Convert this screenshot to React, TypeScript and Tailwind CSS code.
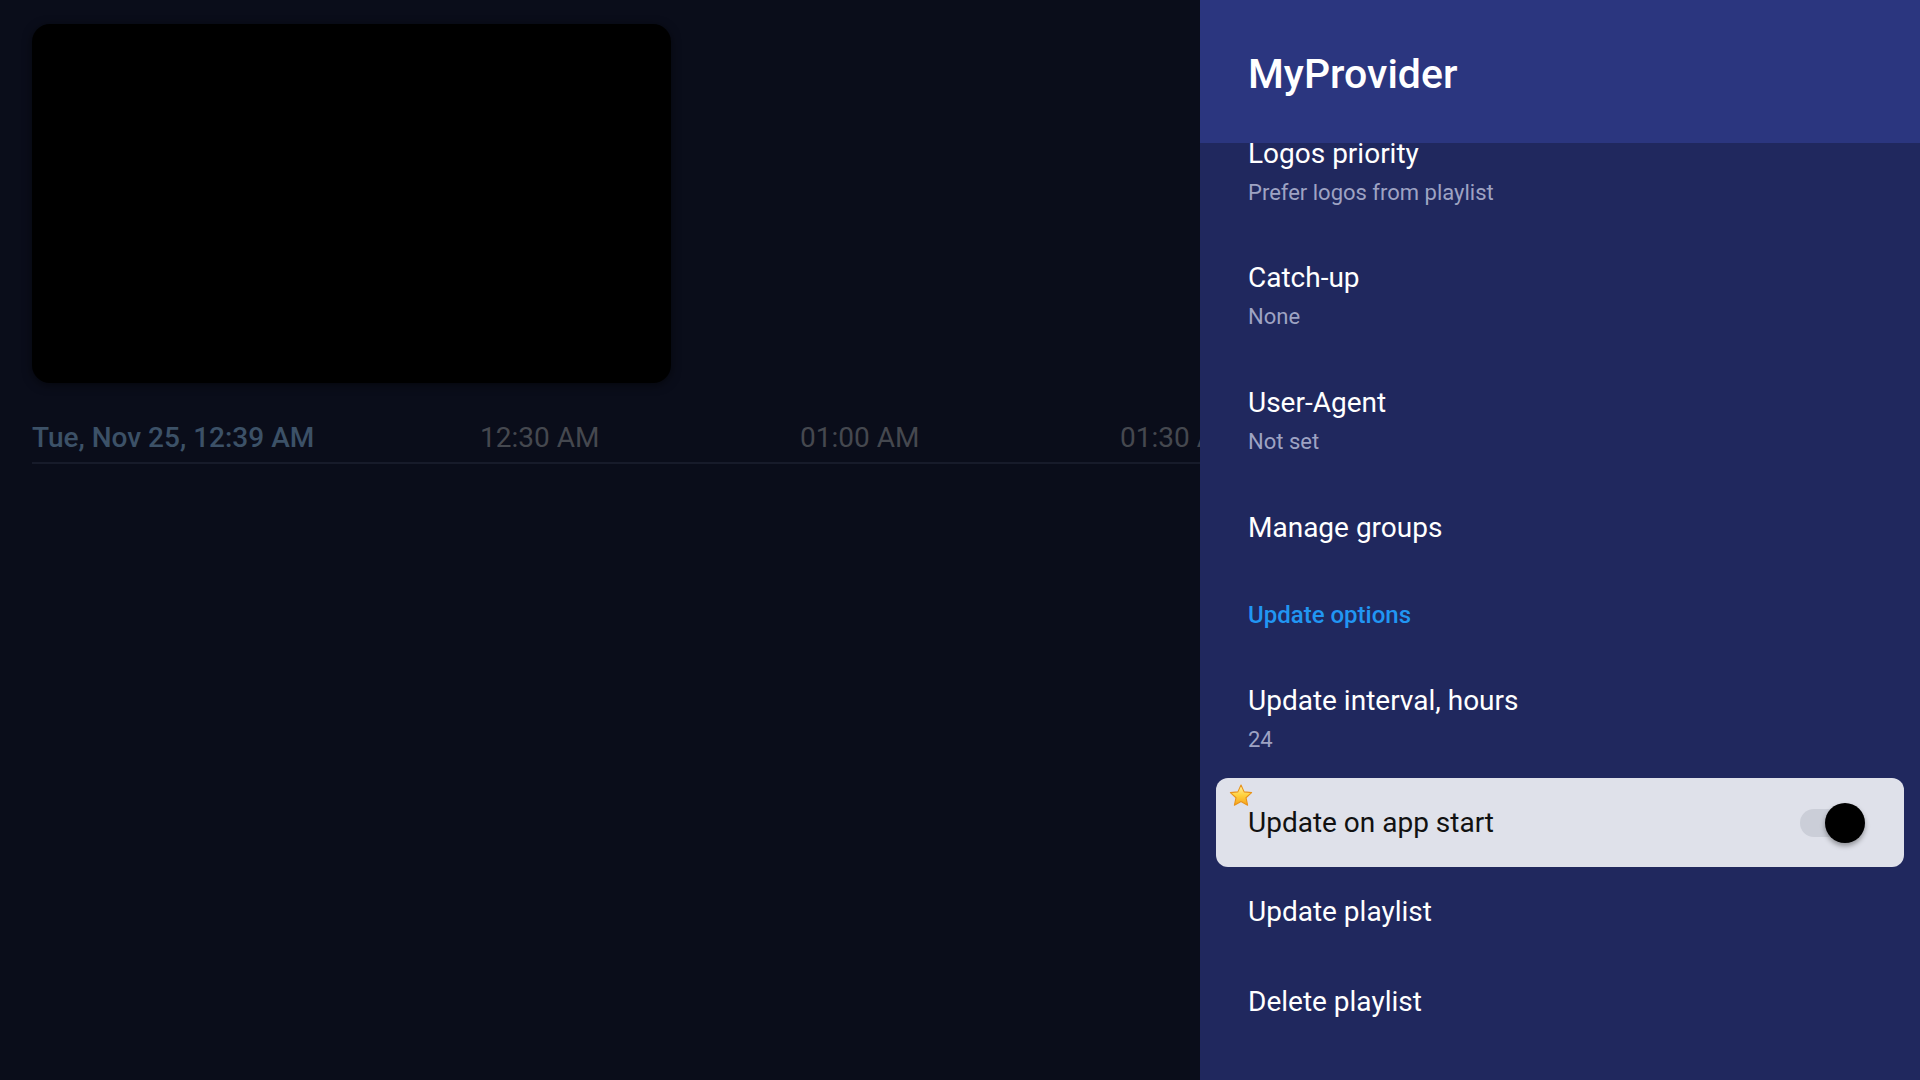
import React from "react";

function Star() {
  return (
    <svg width="26" height="26" viewBox="0 0 24 24" className="absolute left-[12px] top-[5px]">
      <defs>
        <linearGradient id="sg" x1="0" y1="0" x2="0" y2="1">
          <stop offset="0" stopColor="#fff2a8" />
          <stop offset="0.5" stopColor="#ffd23f" />
          <stop offset="1" stopColor="#f7a21b" />
        </linearGradient>
      </defs>
      <path
        d="M12 1.8l2.9 6.4 6.9.7-5.2 4.7 1.5 6.9L12 17l-6.1 3.5 1.5-6.9-5.2-4.7 6.9-.7z"
        fill="url(#sg)"
        stroke="#e8931a"
        strokeWidth="1"
        strokeLinejoin="round"
      />
    </svg>
  );
}

function TwoLine({ title, sub }: { title: string; sub: string }) {
  return (
    <div className="h-[124px] shrink-0 px-[48px] flex flex-col justify-center">
      <div className="text-[28px] leading-[40px] text-white">{title}</div>
      <div className="text-[22px] leading-[38px] text-[#9ea3c3]">{sub}</div>
    </div>
  );
}

function OneLine({ title, h }: { title: string; h: string }) {
  return (
    <div className={`${h} shrink-0 px-[48px] flex items-center`}>
      <div className="text-[28px] leading-[40px] text-white">{title}</div>
    </div>
  );
}

export default function App() {
  return (
    <div className="w-[1920px] h-[1080px] flex bg-[#0a0d1a] overflow-hidden font-['Roboto','Noto_Sans',sans-serif]">
      <div className="w-[1200px] shrink-0 flex flex-col pt-[24px] pl-[32px] overflow-hidden">
        <div className="w-[639px] h-[359px] bg-black rounded-[18px] shadow-[0_2px_10px_rgba(0,0,0,0.5)]" />
        <div className="mt-[37px] h-[36px] flex items-center whitespace-nowrap">
          <span className="w-[448px] shrink-0 text-[28px] leading-[36px] font-medium text-[#3c5167]">
            Tue, Nov 25, 12:39 AM
          </span>
          <span className="w-[320px] shrink-0 text-[28px] leading-[36px] text-[#45484f]">12:30 AM</span>
          <span className="w-[320px] shrink-0 text-[28px] leading-[36px] text-[#45484f]">01:00 AM</span>
          <span className="w-[320px] shrink-0 text-[28px] leading-[36px] text-[#45484f]">01:30 AM</span>
        </div>
        <div className="mt-[6px] h-[2px] bg-[#171b2a]" />
      </div>

      <div className="w-[720px] shrink-0 h-full bg-[#20285e] flex flex-col">
        <div className="h-[143px] shrink-0 bg-[#2b367f] flex items-center pl-[48px] pt-[5px]">
          <span className="text-[41px] leading-[42px] font-medium text-white">MyProvider</span>
        </div>
        <div className="flex-1 overflow-hidden">
          <div className="-mt-[32px] flex flex-col">
            <TwoLine title="Logos priority" sub="Prefer logos from playlist" />
            <TwoLine title="Catch-up" sub="None" />
            <div className="h-[125px] shrink-0 px-[48px] flex flex-col justify-center">
              <div className="text-[28px] leading-[40px] text-white">User-Agent</div>
              <div className="text-[22px] leading-[38px] text-[#9ea3c3]">Not set</div>
            </div>
            <OneLine title="Manage groups" h="h-[88px]" />
            <div className="h-[86px] shrink-0 px-[48px] flex items-center">
              <span className="text-[24px] leading-[30px] font-medium text-[#2196f3]">Update options</span>
            </div>
            <TwoLine title="Update interval, hours" sub="24" />
            <div className="relative mx-[16px] -mt-[4px] h-[89px] shrink-0 rounded-[12px] bg-[#dfe1ea] flex items-center pl-[32px] pr-[39px]">
              <Star />
              <span className="flex-1 text-[28px] leading-[40px] text-[#111111]">Update on app start</span>
              <div className="relative w-[65px] h-[40px] flex items-center">
                <div className="w-[60px] h-[28px] rounded-full bg-[#cbced8]" />
                <div className="absolute right-0 top-0 w-[40px] h-[40px] rounded-full bg-black shadow-[0_3px_5px_rgba(0,0,0,0.35)]" />
              </div>
            </div>
            <OneLine title="Update playlist" h="h-[90px]" />
            <OneLine title="Delete playlist" h="h-[90px]" />
          </div>
        </div>
      </div>
    </div>
  );
}
